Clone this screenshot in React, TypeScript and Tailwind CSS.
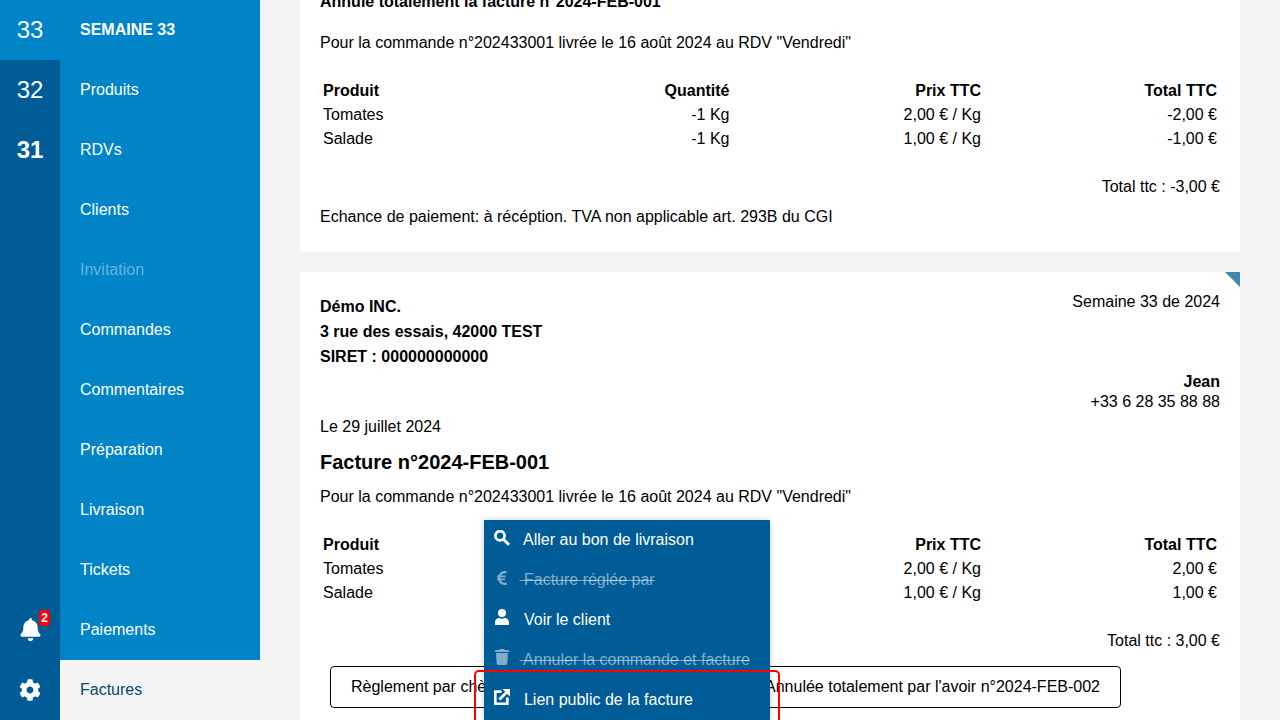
import React from 'react';
import { FaBell, FaCog, FaEuroSign, FaTrash } from 'react-icons/fa';

const navItems = ['Produits', 'RDVs', 'Clients', 'Invitation', 'Commandes', 'Commentaires', 'Préparation', 'Livraison', 'Tickets', 'Paiements'];

const SearchIcon = () => (
  <svg width="16" height="16" viewBox="0 0 16 16" fill="none" stroke="currentColor">
    <circle cx="6" cy="5.8" r="4.6" strokeWidth="2.7" />
    <path d="M9.4 9.2L15 14.8" strokeWidth="3" />
  </svg>
);

const UserIcon = () => (
  <svg width="14" height="16" viewBox="0 0 14 16" fill="currentColor">
    <circle cx="7" cy="4.1" r="4" />
    <path d="M0 16V13.2C0 10.6 2.4 9 4.4 9C5.2 9.5 6 9.7 7 9.7C8 9.7 8.8 9.5 9.6 9C11.6 9 14 10.6 14 13.2V16Z" />
  </svg>
);

const ExternalIcon = () => (
  <svg width="16" height="16" viewBox="0 0 16 16" fill="none" stroke="currentColor">
    <path d="M7.5 2.6H1.3V14.7H13.4V8.5" strokeWidth="2.6" />
    <path d="M5.4 10.6L13.4 2.6" strokeWidth="2.8" />
    <path d="M8.5 0H16V7.5Z" fill="currentColor" stroke="none" />
  </svg>
);

const menuItems = [
  { icon: <SearchIcon />, label: 'Aller au bon de livraison', iconClass: '-mt-1' },
  { icon: <FaEuroSign size={16} />, label: 'Facture réglée par', disabled: true, iconClass: '-mt-[5px]' },
  { icon: <UserIcon />, label: 'Voir le client', iconClass: '-mt-[6px]' },
  { icon: <FaTrash size={16} />, label: 'Annuler la commande et facture', disabled: true, iconClass: '-mt-[6px]' },
  { icon: <ExternalIcon />, label: 'Lien public de la facture', iconClass: '-mt-[6px]' },
];

const InvoiceTable = ({ rows }: { rows: string[][] }) => (
  <table className="w-[900px] table-fixed border-collapse">
    <colgroup>
      <col className="w-[200px]" />
      <col className="w-[212.5px]" />
      <col className="w-[251.5px]" />
      <col className="w-[236px]" />
    </colgroup>
    <thead>
      <tr className="h-6 font-bold">
        <td className="px-[3px]">Produit</td>
        <td className="px-[3px] text-right">Quantité</td>
        <td className="px-[3px] text-right">Prix TTC</td>
        <td className="px-[3px] text-right">Total TTC</td>
      </tr>
    </thead>
    <tbody>
      {rows.map((row) => (
        <tr key={row[0]} className="h-6">
          {row.map((cell, i) => (
            <td key={i} className={i === 0 ? 'px-[3px]' : 'px-[3px] text-right'}>{cell}</td>
          ))}
        </tr>
      ))}
    </tbody>
  </table>
);

export default function App() {
  return (
    <div className="flex h-[720px] w-[1280px] overflow-hidden bg-[#f4f4f4] text-base text-black font-['Liberation_Sans',Arial,sans-serif]">
      <div className="flex w-[60px] shrink-0 flex-col bg-[#005c96] text-white">
        <div className="flex h-[60px] items-center justify-center bg-[#0084c8] text-2xl">33</div>
        <div className="flex h-[60px] items-center justify-center text-2xl">32</div>
        <div className="flex h-[60px] items-center justify-center text-2xl font-bold">31</div>
        <div className="relative mt-auto flex h-[60px] items-center justify-center">
          <FaBell size={23} className="-mt-px" />
          <span className="absolute left-[39px] top-[10px] flex h-4 w-[11px] items-center justify-center rounded-[3px] bg-[#ff0000] text-xs font-bold">2</span>
        </div>
        <div className="flex h-[60px] items-center justify-center">
          <FaCog size={22} />
        </div>
      </div>

      <div className="flex w-[200px] shrink-0 flex-col">
        <div className="bg-[#0084c8] text-white">
          <div className="flex h-[60px] items-center pl-5 font-bold">SEMAINE 33</div>
          {navItems.map((item) => (
            <div key={item} className={`flex h-[60px] items-center pl-5 ${item === 'Invitation' ? 'text-white/40' : ''}`}>
              {item}
            </div>
          ))}
        </div>
        <div className="flex h-[60px] items-center pl-5 text-[#05496f]">Factures</div>
      </div>

      <div className="relative flex-1 px-10">
        <div className="-mt-[40px] bg-white px-5 pb-[25px] pt-8">
          <div className="font-bold leading-5">Annule totalement la facture n°2024-FEB-001</div>
          <div className="mt-[21px] leading-5">Pour la commande n°202433001 livrée le 16 août 2024 au RDV "Vendredi"</div>
          <div className="mt-[26px]">
            <InvoiceTable rows={[['Tomates', '-1 Kg', '2,00 € / Kg', '-2,00 €'], ['Salade', '-1 Kg', '1,00 € / Kg', '-1,00 €']]} />
          </div>
          <div className="mt-[26px] text-right leading-5">Total ttc : -3,00 €</div>
          <div className="mt-[10px] leading-5">Echance de paiement: à récéption. TVA non applicable art. 293B du CGI</div>
        </div>

        <div className="relative mt-5 bg-white p-5">
          <div className="absolute right-0 top-0 border-l-[15px] border-t-[15px] border-l-transparent border-t-[#4085ae]"></div>
          <div className="flex justify-between">
            <div className="pt-[2px] font-bold leading-[25px]">
              <div>Démo INC.</div>
              <div>3 rue des essais, 42000 TEST</div>
              <div>SIRET : 000000000000</div>
            </div>
            <div className="leading-5">Semaine 33 de 2024</div>
          </div>
          <div className="mt-[3px] text-right leading-5">
            <div className="font-bold">Jean</div>
            <div>+33 6 28 35 88 88</div>
          </div>
          <div className="mt-[5px] leading-5">Le 29 juillet 2024</div>
          <h2 className="mt-[13px] text-xl font-bold leading-6">Facture n°2024-FEB-001</h2>
          <div className="mt-[13px] leading-5">Pour la commande n°202433001 livrée le 16 août 2024 au RDV "Vendredi"</div>
          <div className="mt-[26px]">
            <InvoiceTable rows={[['Tomates', '1 Kg', '2,00 € / Kg', '2,00 €'], ['Salade', '1 Kg', '1,00 € / Kg', '1,00 €']]} />
          </div>
          <div className="mt-[26px] text-right leading-5">Total ttc : 3,00 €</div>
          <div className="ml-[10px] mt-[15px] flex w-[791px] gap-[10px]">
            <button className="h-[42px] flex-1 rounded border border-black px-5 text-left">Règlement par chèque</button>
            <button className="h-[42px] shrink-0 rounded border border-black px-5">Annulée totalement par l'avoir n°2024-FEB-002</button>
          </div>
        </div>

        <div className="absolute left-[224px] top-[520px] w-[286px] bg-[#005c96] text-white shadow-[0_0_6px_rgba(0,0,0,0.2)]">
          {menuItems.map((item) => (
            <div key={item.label} className="flex h-10 items-center px-[10px]">
              <span className={`${item.iconClass} mr-[9.5px] flex w-4 shrink-0 justify-center ${item.disabled ? 'opacity-50' : ''}`}>{item.icon}</span>
              <span className={`whitespace-pre ${item.disabled ? 'text-white/50 line-through' : ''}`}> {item.label}</span>
            </div>
          ))}
        </div>
        <div className="pointer-events-none absolute left-[214px] top-[670px] h-[60px] w-[306px] rounded-[5px] border-2 border-[#ff0000]"></div>
      </div>
    </div>
  );
}
